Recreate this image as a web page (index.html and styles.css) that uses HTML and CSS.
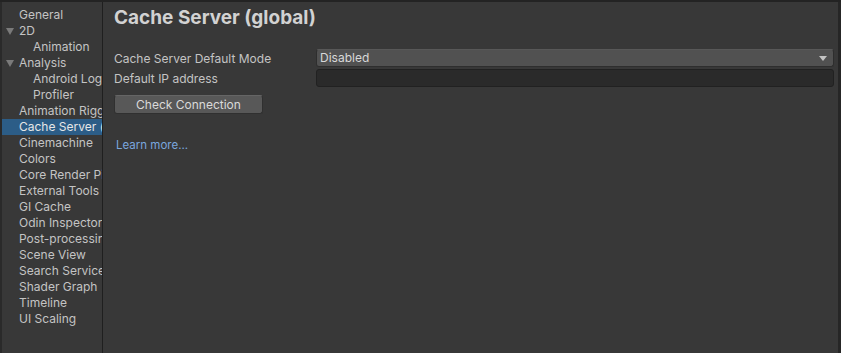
FILE: index.html
```html
<!doctype html>
<html lang="en">
<head>
    <meta charset="UTF-8">
    <title>Preferences</title>
    <link rel="stylesheet" href="styles.css">
</head>
<body>
    <div class="window">
        <div class="sidebar">
            <div class="item">General</div>
            <div class="item parent"><span class="arrow"></span>2D</div>
            <div class="item child">Animation</div>
            <div class="item parent"><span class="arrow"></span>Analysis</div>
            <div class="item child">Android Logcat</div>
            <div class="item child">Profiler</div>
            <div class="item">Animation Rigging</div>
            <div class="item selected">Cache Server (global)</div>
            <div class="item">Cinemachine</div>
            <div class="item">Colors</div>
            <div class="item">Core Render Pipeline</div>
            <div class="item">External Tools</div>
            <div class="item">GI Cache</div>
            <div class="item">Odin Inspector</div>
            <div class="item">Post-processing</div>
            <div class="item">Scene View</div>
            <div class="item">Search Service</div>
            <div class="item">Shader Graph</div>
            <div class="item">Timeline</div>
            <div class="item">UI Scaling</div>
        </div>
        <div class="content">
            <h1 class="title">Cache Server (global)</h1>
            <div class="row">
                <span class="label">Cache Server Default Mode</span>
                <div class="dropdown">Disabled<span class="caret"></span></div>
            </div>
            <div class="row">
                <span class="label">Default IP address</span>
                <div class="field"></div>
            </div>
            <div class="btn">Check Connection</div>
            <a class="link">Learn more...</a>
        </div>
        <div class="edge"></div>
    </div>
</body>
</html>
```
FILE: styles.css
```css
*{
    margin: 0;
    padding: 0;
    box-sizing: border-box;
}
body{
    width: 841px;height: 353px;overflow: hidden;
    background: #383838;
    font-family: Inter, "Noto Sans", sans-serif;
    font-size: 12px;color: #c4c4c4;
}
.window{
    display: flex;height: 353px;
    border-top: 2px solid #232323;
}
.sidebar{
    width: 103px;flex: none;
    border-left: 2px solid #2a2a2a;
    border-right: 1px solid #1f1f1f;
    padding-top: 5px;
    overflow: hidden;
}
.item{
    height: 16px;line-height: 16px;
    padding-left: 17px;
    white-space: nowrap;overflow: hidden;
    position: relative;
}
.item.child{
    padding-left: 31px;
}
.item.selected{
    background: #2c5d87;color: #e6e6e6;
}
.arrow{
    position: absolute;left: 4px;top: 5px;
    border-left: 4px solid transparent;border-right: 4px solid transparent;
    border-top: 7px solid #7a7a7a;
}
.content{
    flex: 1;
    padding: 4px 4px 0 11px;
}
.title{
    font-size: 19px;font-weight: 700;color: #d2d2d2;
    line-height: 24px;
    margin-bottom: 18px;
}
.row{
    display: flex;align-items: center;
    height: 20px;
}
.label{
    width: 202px;flex: none;
}
.dropdown{
    flex: 1;height: 18px;line-height: 16px;
    background: #515151;border: 1px solid #2e2e2e;border-top-color: #585858;
    border-radius: 3px;padding-left: 3px;color: #d8d8d8;
    position: relative;
}
.caret{
    position: absolute;right: 6px;top: 6px;
    border-left: 4px solid transparent;border-right: 4px solid transparent;
    border-top: 5px solid #c4c4c4;
}
.field{
    flex: 1;height: 18px;
    background: #2a2a2a;border: 1px solid #212121;
    border-radius: 3px;
}
.btn{
    width: 149px;height: 19px;line-height: 17px;margin-top: 7px;
    background: #585858;border: 1px solid #303030;border-top-color: #656565;
    border-radius: 3px;text-align: center;color: #dadada;
}
.link{
    display: block;margin: 24px 0 0 2px;
    color: #7aa6de;font-size: 11.5px;
}
.edge{
    width: 3px;flex: none;background: #262626;
}
```
